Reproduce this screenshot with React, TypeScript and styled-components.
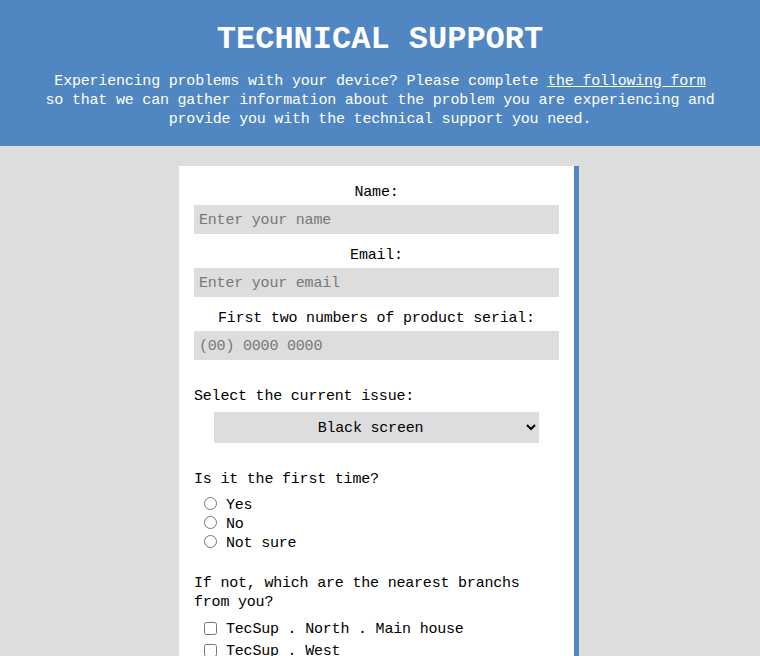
import React from "react";
import styled, { createGlobalStyle } from "styled-components";

const GlobalStyle = createGlobalStyle`
  html, body {
    margin: 0;
    padding: 0;
    background: #dddddd;
  }
  body {
    font-family: "Liberation Mono", "DejaVu Sans Mono", monospace;
    font-size: 15px;
    letter-spacing: -0.2px;
    line-height: 19px;
    color: #000;
  }
`;

const Header = styled.header`
  background: #5086c2;
  color: #ffffff;
  text-align: center;
  padding: 20px 0 17px;
`;

const Title = styled.h1`
  margin: 0;
  font-family: "Liberation Mono", monospace;
  font-weight: bold;
  font-size: 32px;
  line-height: 40px;
  letter-spacing: 0;
`;

const Intro = styled.p`
  margin: 12px auto 0;
  max-width: 673px;
`;

const Underlined = styled.span`
  text-decoration: underline;
`;

const Card = styled.form`
  box-sizing: border-box;
  width: 400px;
  margin: 20px 0 40px calc(50% - 201px);
  padding: 15px 15px 20px;
  background: #ffffff;
  border-right: 5px solid #5086c2;
  display: flex;
  flex-direction: column;
`;

const CenterLabel = styled.label<{ $first?: boolean }>`
  display: block;
  text-align: center;
  padding-top: 2px;
  margin-top: ${(p) => (p.$first ? "0" : "10px")};
  margin-bottom: 3px;
`;

const TextInput = styled.input`
  box-sizing: border-box;
  width: 100%;
  height: 29px;
  border: none;
  outline: none;
  background: #dddddd;
  padding: 2px 5px 0;
  font-family: inherit;
  font-size: 15px;
  letter-spacing: -0.2px;
  color: #000;
  &::placeholder {
    color: #777777;
  }
`;

const Heading = styled.p<{ $top: number; $bottom: number }>`
  padding-top: 2px;
  margin: ${(p) => p.$top}px 0 ${(p) => p.$bottom - 2}px;
`;

const Select = styled.select`
  box-sizing: border-box;
  align-self: center;
  width: 325px;
  height: 31px;
  padding-top: 2px;
  border: none;
  outline: none;
  background: #dddddd;
  font-family: inherit;
  font-size: 15px;
  letter-spacing: -0.2px;
  color: #000;
  text-align: center;
  text-align-last: center;
`;

const OptionRow = styled.label<{ $height: number }>`
  display: flex;
  align-items: center;
  height: ${(p) => p.$height}px;
`;

const OptionText = styled.span`
  padding-top: 3px;
`;

const Choice = styled.input`
  width: 13px;
  height: 13px;
  margin: 0 9px 0 10px;
`;

const Submit = styled.button`
  align-self: center;
  margin-top: 20px;
  border: none;
  background: #5086c2;
  color: #fff;
  font-family: inherit;
  font-size: 15px;
  padding: 8px 24px;
`;

export default function App() {
  return (
    <>
      <GlobalStyle />
      <Header>
        <Title>TECHNICAL SUPPORT</Title>
        <Intro>
          Experiencing problems with your device? Please complete{" "}
          <Underlined>the following form</Underlined> so that we can gather
          information about the problem you are experiencing and provide you
          with the technical support you need.
        </Intro>
      </Header>
      <Card onSubmit={(e) => e.preventDefault()}>
        <CenterLabel $first htmlFor="name">Name:</CenterLabel>
        <TextInput id="name" placeholder="Enter your name" />
        <CenterLabel htmlFor="email">Email:</CenterLabel>
        <TextInput id="email" placeholder="Enter your email" />
        <CenterLabel htmlFor="serial">First two numbers of product serial:</CenterLabel>
        <TextInput id="serial" placeholder="(00) 0000 0000" />

        <Heading $top={25} $bottom={8}>Select the current issue:</Heading>
        <Select defaultValue="black">
          <option value="black">Black screen</option>
          <option value="noise">Strange noise</option>
          <option value="power">Does not turn on</option>
          <option value="other">Other</option>
        </Select>

        <Heading $top={25} $bottom={7}>Is it the first time?</Heading>
        <OptionRow $height={19}>
          <Choice type="radio" name="first" />
          <OptionText>Yes</OptionText>
        </OptionRow>
        <OptionRow $height={19}>
          <Choice type="radio" name="first" />
          <OptionText>No</OptionText>
        </OptionRow>
        <OptionRow $height={19}>
          <Choice type="radio" name="first" />
          <OptionText>Not sure</OptionText>
        </OptionRow>

        <Heading $top={21} $bottom={7}>If not, which are the nearest branchs from you?</Heading>
        <OptionRow $height={22}>
          <Choice type="checkbox" />
          <OptionText>TecSup . North . Main house</OptionText>
        </OptionRow>
        <OptionRow $height={22}>
          <Choice type="checkbox" />
          <OptionText>TecSup . West</OptionText>
        </OptionRow>
        <OptionRow $height={22}>
          <Choice type="checkbox" />
          <OptionText>TecSup . East</OptionText>
        </OptionRow>
        <OptionRow $height={22}>
          <Choice type="checkbox" />
          <OptionText>TecSup . South</OptionText>
        </OptionRow>

        <Submit type="submit">Send</Submit>
      </Card>
    </>
  );
}
